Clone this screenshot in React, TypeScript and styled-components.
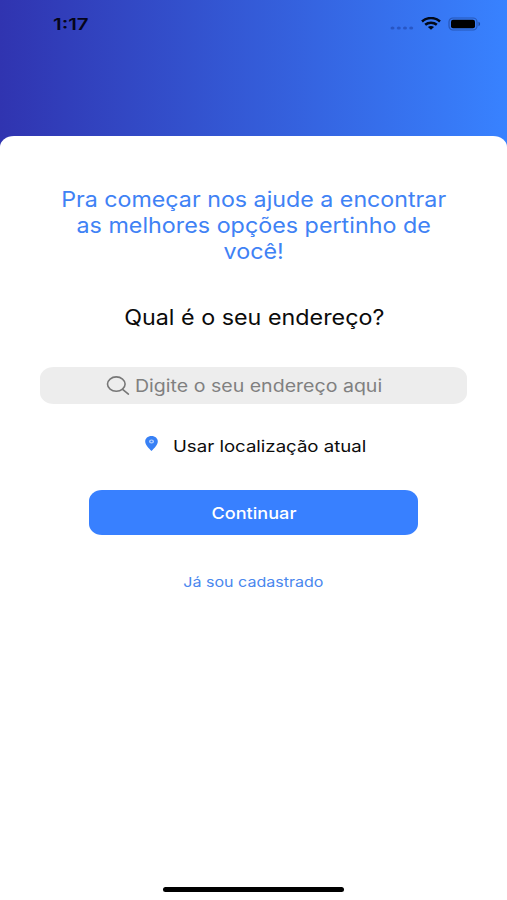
import React from "react";
import styled, { createGlobalStyle } from "styled-components";

const GlobalStyle = createGlobalStyle`
  * { box-sizing: border-box; }
  body { margin: 0; background: #fff; font-family: Inter, "Liberation Sans", sans-serif; }
`;

const Screen = styled.main`
  display: flex;
  flex-direction: column;
  width: 507px;
  height: 900px;
  overflow: hidden;
  background: linear-gradient(90deg, #3034b0 0%, #3882ff 100%);
`;

const StatusBar = styled.header`
  display: flex;
  justify-content: space-between;
  align-items: center;
  height: 135.5px;
  padding: 0 26px 88px 53px;
`;

const StatusIcons = styled.div`
  display: flex;
  align-items: center;
`;

const Sheet = styled.section`
  flex: 1;
  display: flex;
  flex-direction: column;
  align-items: center;
  padding: 50.5px 0 8px;
  border-radius: 14px 14px 0 0 / 11px 11px 0 0;
  background: #fff;
`;

/* Extended-width text: the glyphs are widened around the chosen origin. */
const Wide = styled.span<{ $x: number; $left?: boolean }>`
  display: block;
  white-space: nowrap;
  transform: scaleX(${(p) => p.$x});
  transform-origin: ${(p) => (p.$left ? "left" : "center")} center;
`;

const Clock = styled.time`
  font-size: 16px;
  font-weight: 600;
  line-height: 20px;
  color: #05051a;
`;

const Title = styled.h1`
  margin: 0 0 0 1px;
  font-size: 21.2px;
  font-weight: 400;
  line-height: 26px;
  text-align: center;
  color: #3f82f5;
`;

const Question = styled.h2`
  margin: 40px 0 0 1px;
  font-size: 21.2px;
  font-weight: 400;
  line-height: 26px;
  color: #0b0b0b;
`;

const SearchField = styled.div`
  display: flex;
  align-items: center;
  width: 427px;
  height: 37px;
  margin-top: 37px;
  padding-left: 66px;
  border-radius: 14px / 11px;
  background: #ededed;
  color: #808080;
  font-size: 17.2px;
  line-height: 22px;
`;

const SearchLabel = styled.div`
  margin-left: 5px;
`;

const LocationRow = styled.div`
  display: flex;
  width: 362px;
  height: 24px;
  margin-top: 30px;
  align-self: flex-end;
  gap: 14.5px;
  font-size: 16.4px;
  line-height: 24px;
  color: #0b0b0b;
`;

const Continue = styled.button`
  display: flex;
  justify-content: center;
  align-items: center;
  width: 329px;
  height: 45px;
  margin: 31.5px 0 0;
  padding: 1px 0 0 1px;
  border: 0;
  border-radius: 13px / 11px;
  background: #3880ff;
  color: #fff;
  font: 500 16.2px/22px Inter, "Liberation Sans", sans-serif;
`;

const SignIn = styled.a`
  margin-top: 37.5px;
  font-size: 13.6px;
  line-height: 20px;
  color: #4a87ee;
`;

const HomeIndicator = styled.div`
  width: 181px;
  height: 5px;
  margin-top: auto;
  border-radius: 3px;
  background: #000;
`;

const CellDots = () => (
  <svg width="24" height="6" viewBox="0 0 24 6" fill="#12308a" fillOpacity="0.42">
    <ellipse cx="2.5" cy="3" rx="2" ry="1.5" />
    <ellipse cx="8.8" cy="3" rx="2" ry="1.5" />
    <ellipse cx="15" cy="3" rx="2" ry="1.5" />
    <ellipse cx="21.2" cy="3" rx="2" ry="1.5" />
  </svg>
);

const Dots = styled.span`
  display: flex;
  margin: 8px 7px 0 0;
`;

const Wifi = () => (
  <svg width="20" height="13" viewBox="0 0 20 13" fill="none" stroke="#020918" strokeWidth="2.5">
    <path d="M1 4.5C6-.1 14-.1 19 4.5" />
    <path d="M4.2 7.8C7.5 4.9 12.5 4.9 15.8 7.8" />
    <path d="M10 12.8 6.9 10C8.6 8.6 11.4 8.6 13.1 10Z" fill="#020918" stroke="none" />
  </svg>
);

const Battery = styled.svg`
  margin-left: 7px;
`;

const SearchIcon = () => (
  <svg width="24" height="20" viewBox="0 0 24 20" fill="none" stroke="#777" strokeWidth="1.6">
    <ellipse cx="10.3" cy="8.1" rx="8.8" ry="7.2" />
    <path d="M16.6 13.3 22.4 18.1" strokeLinecap="round" />
  </svg>
);

const Pin = () => (
  <svg width="13" height="15" viewBox="0 0 13 15">
    <path d="M6.5 0C2.8 0 .2 2.4.2 5.5.2 9 3.8 12.1 6.5 15 9.2 12.1 12.8 9 12.8 5.5 12.8 2.4 10.2 0 6.5 0Z" fill="#3880f5" />
    <ellipse cx="6.5" cy="5.4" rx="2.5" ry="2" fill="#b9d3ff" />
    <ellipse cx="6.5" cy="5.4" rx="1.1" ry="0.9" fill="#3880f5" />
  </svg>
);

const PinSlot = styled.span`
  display: flex;
  margin-top: 2px;
`;

export default function App() {
  return (
    <>
      <GlobalStyle />
      <Screen>
        <StatusBar>
          <Clock>
            <Wide $x={1.28} $left>1:17</Wide>
          </Clock>
          <StatusIcons>
            <Dots><CellDots /></Dots>
            <Wifi />
            <Battery width="33" height="14" viewBox="0 0 33 14">
              <rect x="1" y="1" width="28" height="12" rx="4" fill="none" stroke="#16347a" strokeOpacity="0.5" strokeWidth="1.2" />
              <rect x="3" y="2.8" width="24" height="8.4" rx="2" fill="#000" />
              <path d="M30.5 4.8C32.6 5.5 32.6 8.5 30.5 9.2Z" fill="#16347a" fillOpacity="0.7" />
            </Battery>
          </StatusIcons>
        </StatusBar>
        <Sheet>
          <Title>
            <Wide $x={1.096}>Pra começar nos ajude a encontrar</Wide>
            <Wide $x={1.1}>as melhores opções pertinho de</Wide>
            <Wide $x={1.1}>você!</Wide>
          </Title>
          <Question>
            <Wide $x={1.1}>Qual é o seu endereço?</Wide>
          </Question>
          <SearchField>
            <SearchIcon />
            <SearchLabel>
              <Wide $x={1.138} $left>Digite o seu endereço aqui</Wide>
            </SearchLabel>
          </SearchField>
          <LocationRow>
            <PinSlot><Pin /></PinSlot>
            <Wide $x={1.136} $left>Usar localização atual</Wide>
          </LocationRow>
          <Continue type="button">
            <Wide $x={1.118}>Continuar</Wide>
          </Continue>
          <SignIn>
            <Wide $x={1.18}>Já sou cadastrado</Wide>
          </SignIn>
          <HomeIndicator />
        </Sheet>
      </Screen>
    </>
  );
}
